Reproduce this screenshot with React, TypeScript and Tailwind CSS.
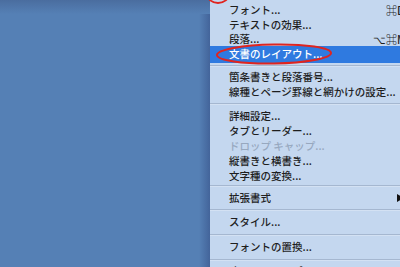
type Item =
  | { kind: 'item'; label: string; h: string; mod?: string; key?: string; disabled?: boolean; active?: boolean; submenu?: boolean }
  | { kind: 'sep'; h: string };

const items: Item[] = [
  { kind: 'item', label: 'フォント...', h: 'h-[16px]', key: '⌘D' },
  { kind: 'item', label: 'テキストの効果...', h: 'h-[14px]' },
  { kind: 'item', label: '段落...', h: 'h-[14px]', mod: '⌥', key: '⌘M' },
  { kind: 'item', label: '文書のレイアウト...', h: 'h-[17px]', active: true },
  { kind: 'sep', h: 'h-[6px]' },
  { kind: 'item', label: '箇条書きと段落番号...', h: 'h-[16px]' },
  { kind: 'item', label: '線種とページ罫線と網かけの設定...', h: 'h-[15px]' },
  { kind: 'sep', h: 'h-[8px]' },
  { kind: 'item', label: '詳細設定...', h: 'h-[16px]' },
  { kind: 'item', label: 'タブとリーダー...', h: 'h-[15px]' },
  { kind: 'item', label: 'ドロップ キャップ...', h: 'h-[15px]', disabled: true },
  { kind: 'item', label: '縦書きと横書き...', h: 'h-[15px]' },
  { kind: 'item', label: '文字種の変換...', h: 'h-[14px]' },
  { kind: 'sep', h: 'h-[6px]' },
  { kind: 'item', label: '拡張書式', h: 'h-[18px]', submenu: true },
  { kind: 'sep', h: 'h-[6px]' },
  { kind: 'item', label: 'スタイル...', h: 'h-[19px]' },
  { kind: 'sep', h: 'h-[6px]' },
  { kind: 'item', label: 'フォントの置換...', h: 'h-[19px]' },
  { kind: 'sep', h: 'h-[6px]' },
  { kind: 'item', label: 'オートシェイプ...', h: 'h-[16px]' },
];

export default function App() {
  return (
    <div
      className="relative flex h-[267px] w-[400px] overflow-hidden bg-[#5580b5]"
      style={{ fontFamily: '"Noto Sans CJK JP", "Liberation Sans", sans-serif' }}
    >
      {/* desktop behind the menu */}
      <div className="relative flex w-[210px] flex-none">
        <div className="flex-1" />
        <div className="w-[11px] bg-linear-to-r from-[#5580b5] to-[#43649a]" />
        <div className="absolute inset-x-0 top-0 h-[14px] bg-linear-to-b from-[#4a6d9f] to-[#5580b5]" />
      </div>

      {/* format menu */}
      <div className="flex w-[212px] flex-none flex-col bg-[#c4d7ef] pt-[2px] text-[10.5px] leading-none font-medium">
        {items.map((it, i) =>
          it.kind === 'sep' ? (
            <div key={i} className={`flex flex-none flex-col justify-center ${it.h}`}>
              <div className="h-px bg-[#a5b7d0]" />
              <div className="h-px bg-[#d3e1f3]" />
            </div>
          ) : (
            <div
              key={i}
              className={`flex flex-none items-center pl-[19px] pr-[14px] ${it.h} ${
                it.active ? 'bg-[#2f7ae0] text-white' : it.disabled ? 'text-[#97a8bf]' : 'text-[#1e1e1e]'
              }`}
            >
              <span className="flex-1 whitespace-nowrap">{it.label}</span>
              {it.key && (
                <span className="flex whitespace-nowrap text-[11px]">
                  <span className="w-[14px] text-right">{it.mod}</span>
                  <span className="w-[22px]">{it.key}</span>
                </span>
              )}
              {it.submenu && (
                <span className="mr-[4px] h-0 w-0 border-y-[4px] border-l-[7px] border-y-transparent border-l-[#111]" />
              )}
            </div>
          ),
        )}
      </div>

      <svg className="pointer-events-none absolute inset-0" width="400" height="267" viewBox="0 0 400 267">
        <ellipse cx="218" cy="-6" rx="11" ry="9" fill="none" stroke="#e0241f" strokeWidth="1.8" />
        <ellipse
          cx="274"
          cy="54"
          rx="57"
          ry="9.5"
          fill="none"
          stroke="#e0241f"
          strokeWidth="2"
          transform="rotate(-1 274 54)"
        />
      </svg>
    </div>
  );
}
